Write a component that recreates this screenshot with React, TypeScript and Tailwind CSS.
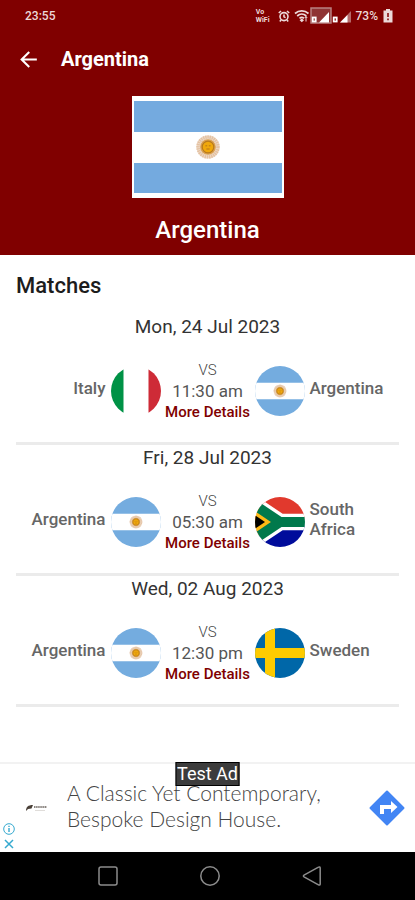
import { MdArrowBack } from "react-icons/md";

type Country = "Argentina" | "Italy" | "South Africa" | "Sweden";

const matches: { date: string; time: string; home: Country; away: Country }[] = [
    { date: "Mon, 24 Jul 2023", time: "11:30 am", home: "Italy", away: "Argentina" },
    { date: "Fri, 28 Jul 2023", time: "05:30 am", home: "Argentina", away: "South Africa" },
    { date: "Wed, 02 Aug 2023", time: "12:30 pm", home: "Argentina", away: "Sweden" },
];

function Sun() {
    return (
        <g>
            <circle r="5.8" fill="#efdccb" />
            <circle r="5" fill="none" stroke="#d9a877" strokeWidth="1.8" strokeDasharray="0.7 0.4" opacity="0.5" />
            <circle r="3.9" fill="#d9a050" />
            <circle r="2.9" fill="#f0a80c" stroke="#b87a1c" strokeWidth="0.6" />
            <path d="M-1.3-.6h.9M.4-.6h.9M-.8 1h1.6" stroke="#a8691c" strokeWidth="0.4" />
        </g>
    );
}

function FlagArt({ country }: { country: Country }) {
    if (country === "Italy") {
        return (
            <>
                <path fill="#fff" d="M0 0h90v60H0z" />
                <path fill="#009246" d="M0 0h30v60H0z" />
                <path fill="#ce2b37" d="M60 0h30v60H60z" />
            </>
        );
    }
    if (country === "South Africa") {
        return (
            <>
                <path fill="#e1392d" d="M0 0h90v30H0z" />
                <path fill="#000c9b" d="M0 30h90v30H0z" />
                <path fill="none" stroke="#fff" strokeWidth="20" d="M0 0 45 30 0 60M45 30h45" />
                <path fill="#ffb915" d="M0 0 45 30 0 60z" />
                <path fill="#000" d="M0 12 27 30 0 48z" />
                <path fill="none" stroke="#00794c" strokeWidth="12" d="M0 0 45 30 0 60M45 30h45" />
            </>
        );
    }
    if (country === "Sweden") {
        return (
            <>
                <path fill="#0067a8" d="M0 0h90v60H0z" />
                <path fill="#fecb00" d="M27 0h12v60H27zM0 24h90v12H0z" />
            </>
        );
    }
    return (
        <>
            <path fill="#74acdf" d="M0 0h90v60H0z" />
            <path fill="#fff" d="M0 20h90v20H0z" />
            <g transform="translate(45 30) scale(1.3)">
                <Sun />
            </g>
        </>
    );
}

function RoundFlag({ country }: { country: Country }) {
    // the viewBox keeps the middle square of the 3:2 flag
    return (
        <svg viewBox="15 0 60 60" className="size-[50px] shrink-0 rounded-full" role="img" aria-label={`Flag of ${country}`}>
            <FlagArt country={country} />
        </svg>
    );
}

function StatusBar() {
    return (
        <div className="flex h-8 items-center justify-between pl-[25px] pr-[22px] text-xs font-medium text-[#ecdada]">
            <span>23:55</span>
            <div className="flex items-center gap-1">
                <span className="flex flex-col text-[7px] font-bold leading-[8px]">
                    <span>Vo</span>
                    <span>WiFi</span>
                </span>
                <svg viewBox="0 0 12 12" className="ml-1 size-3" fill="none" stroke="currentColor" strokeWidth="1.6">
                    <circle cx="6" cy="6.6" r="4" />
                    <path d="M6 4.4v2.4l1.6.8M.8 3 3 1M11.2 3 9 1M3 10l-1.2 1.4M9 10l1.2 1.4" />
                </svg>
                <svg viewBox="0 0 58 18" className="h-[18px] w-[58px]">
                    <g fill="none" stroke="currentColor" strokeWidth="1.7">
                        <path d="M1 6.500C5 3 10.500 3 14.500 6.500M3.200 9c2.700-2.400 6.400-2.400 9.100 0M5.500 11.400c1.400-1.200 3.100-1.200 4.500 0" />
                    </g>
                    <path d="M7.800 11.500 10 13.300 7.800 15.200 5.600 13.300z" fill="currentColor" />
                    <path d="M12 9.500v5M10.800 11l1.200-1.500 1.200 1.500" fill="none" stroke="currentColor" />
                    <path d="M17 1h20v15H17z" fill="#8f3434" stroke="#b98080" strokeWidth="1.500" />
                    <path d="M35 5v10.500H25z" fill="#fff" />
                    <rect x="18.700" y="10.500" width="3" height="4" fill="none" stroke="#fff" strokeWidth="1.800" />
                    <path d="M57 4v11.500H46z" fill="#b56a6a" />
                    <path d="M53.500 8v7.500h-7.500z" fill="#fff" />
                    <rect x="39.700" y="10.500" width="3" height="4" fill="none" stroke="#fff" strokeWidth="1.800" />
                </svg>
                <span>73%</span>
                <svg viewBox="0 0 10 14" className="ml-px h-[14px] w-[10px]">
                    <path d="M3 0h4v1.500h2.500V13.500h-9V1.500H3z" fill="currentColor" />
                    <path d="M5 4v4M5 9.500v1.700" stroke="#800000" strokeWidth="1.500" />
                </svg>
            </div>
        </div>
    );
}

function Match({ date, time, home, away }: (typeof matches)[number]) {
    return (
        <li className="border-b-[3px] border-[#ebebeb] pb-[34px]">
            <p className="text-center text-[19px] leading-[26px] text-[#333]">{date}</p>
            <div className="mt-[18px] grid h-[50px] grid-cols-[1fr_auto_1fr] items-center gap-[5px]">
                <div className="flex items-center justify-end gap-[5px]">
                    <span className="mb-1.5 text-[17px] font-medium leading-5 text-[#666]">{home}</span>
                    <RoundFlag country={home} />
                </div>
                <div className="flex w-[84px] flex-col items-center pt-0.5">
                    <span className="text-[15px] font-light leading-[21px] text-[#444]">VS</span>
                    <span className="text-[17px] leading-[21px] text-[#555]">{time}</span>
                    <a href="#details" className="whitespace-nowrap text-[15px] font-medium leading-[21px] text-[#800000]">
                        More Details
                    </a>
                </div>
                <div className="flex items-center gap-[5px]">
                    <RoundFlag country={away} />
                    <span className="mb-1.5 w-20 text-[17px] font-medium leading-5 text-[#666]">{away}</span>
                </div>
            </div>
        </li>
    );
}

function AdBanner() {
    return (
        <aside className="relative flex h-[90px] items-center border-t-2 border-[#f2f2f2] bg-white px-3">
            <span className="absolute left-1/2 top-[-2px] -translate-x-1/2 whitespace-nowrap border border-black bg-[#3c3c3c] px-px text-lg leading-[22px] text-white">
                Test Ad
            </span>
            <div className="absolute bottom-0 left-[3px] flex flex-col gap-[3px] pb-[2px] text-[#35a9cf]">
                <button aria-label="Why this ad">
                    <svg viewBox="0 0 12 12" className="size-3" fill="none" stroke="currentColor">
                        <circle cx="6" cy="6" r="5.300" />
                        <path d="M6 5v4M6 2.800v1.300" strokeWidth="1.400" />
                    </svg>
                </button>
                <button aria-label="Close ad">
                    <svg viewBox="0 0 12 12" className="size-3" fill="none" stroke="currentColor" strokeWidth="1.500">
                        <path d="m2 2 8 8M10 2l-8 8" />
                    </svg>
                </button>
            </div>
            <svg viewBox="0 0 22 8" className="ml-[14px] h-2 w-[22px] shrink-0">
                <path d="M0 7C0 3 2 1 7 1L5.500 4.500 2 5z" fill="#4a4038" />
                <path d="M8 3h13" stroke="#8b8580" strokeWidth="2" strokeDasharray="1.500 0.600" />
                <path d="M9 6.500h10" stroke="#d8d4d0" strokeWidth="0.800" />
            </svg>
            <p className="mb-1 ml-[19px] flex-1 font-['Lato'] text-[21px] font-light leading-[26px] text-[#444]">
                A Classic Yet Contemporary, Bespoke Design House.
            </p>
            <a href="#directions" aria-label="Directions" className="mr-[-2px] shrink-0">
                <svg viewBox="0 0 36 36" className="size-9">
                    <path d="M18 1.500 34.500 18 18 34.500 1.500 18z" fill="#4285f4" stroke="#4285f4" strokeWidth="2" strokeLinejoin="round" />
                    <path d="M11 24v-9h11v-4l6.500 6-6.500 6v-4h-7v5z" fill="#fff" />
                </svg>
            </a>
        </aside>
    );
}

function NavBar() {
    return (
        <nav className="flex h-12 items-center justify-center gap-[82px] bg-black pl-1 text-[#8c8c8c]">
            <button aria-label="Recent apps">
                <svg viewBox="0 0 20 20" className="size-5" fill="none" stroke="currentColor" strokeWidth="1.500">
                    <rect x="1" y="1" width="18" height="18" rx="2" />
                </svg>
            </button>
            <button aria-label="Home">
                <svg viewBox="0 0 20 20" className="size-5" fill="none" stroke="currentColor" strokeWidth="1.500">
                    <circle cx="10" cy="10" r="9.200" />
                </svg>
            </button>
            <button aria-label="Back">
                <svg viewBox="0 0 20 20" className="size-5" fill="none" stroke="currentColor" strokeWidth="1.500" strokeLinejoin="round">
                    <path d="M16.500 1.200c1-.6 1.700-.2 1.700.9v15.800c0 1.100-.7 1.500-1.700.9L2 10.800c-.8-.5-.8-1.100 0-1.600z" />
                </svg>
            </button>
        </nav>
    );
}

export default function App() {
    return (
        <div className="flex min-h-screen flex-col bg-white font-['Roboto',sans-serif]">
            <header className="flex flex-col bg-[#800000] pb-[9px] text-white">
                <StatusBar />
                <div className="flex h-[54px] items-center gap-5 pl-4">
                    <button aria-label="Go back">
                        <MdArrowBack className="size-[25px]" />
                    </button>
                    <h1 className="text-xl font-bold">Argentina</h1>
                </div>
                <div className="mt-[10px] self-center border-2 border-white bg-white py-[3px]">
                    <svg viewBox="0 0 148 92" className="h-[92px] w-[148px]" role="img" aria-label="Flag of Argentina">
                        <path fill="#74aadf" d="M0 0h148v92H0z" />
                        <path fill="#fff" d="M0 31h148v31H0z" />
                        <g transform="translate(74 46) scale(2)">
                            <Sun />
                        </g>
                    </svg>
                </div>
                <h2 className="mt-4 text-center text-2xl font-medium">Argentina</h2>
            </header>

            <main className="flex-1 px-4 pt-[17px]">
                <h2 className="mb-[14px] text-[22px] font-medium leading-7 text-[#1c1c1c]">Matches</h2>
                <ul>
                    {matches.map((match) => (
                        <Match key={match.date} {...match} />
                    ))}
                </ul>
            </main>

            <footer>
                <AdBanner />
                <NavBar />
            </footer>
        </div>
    );
}
